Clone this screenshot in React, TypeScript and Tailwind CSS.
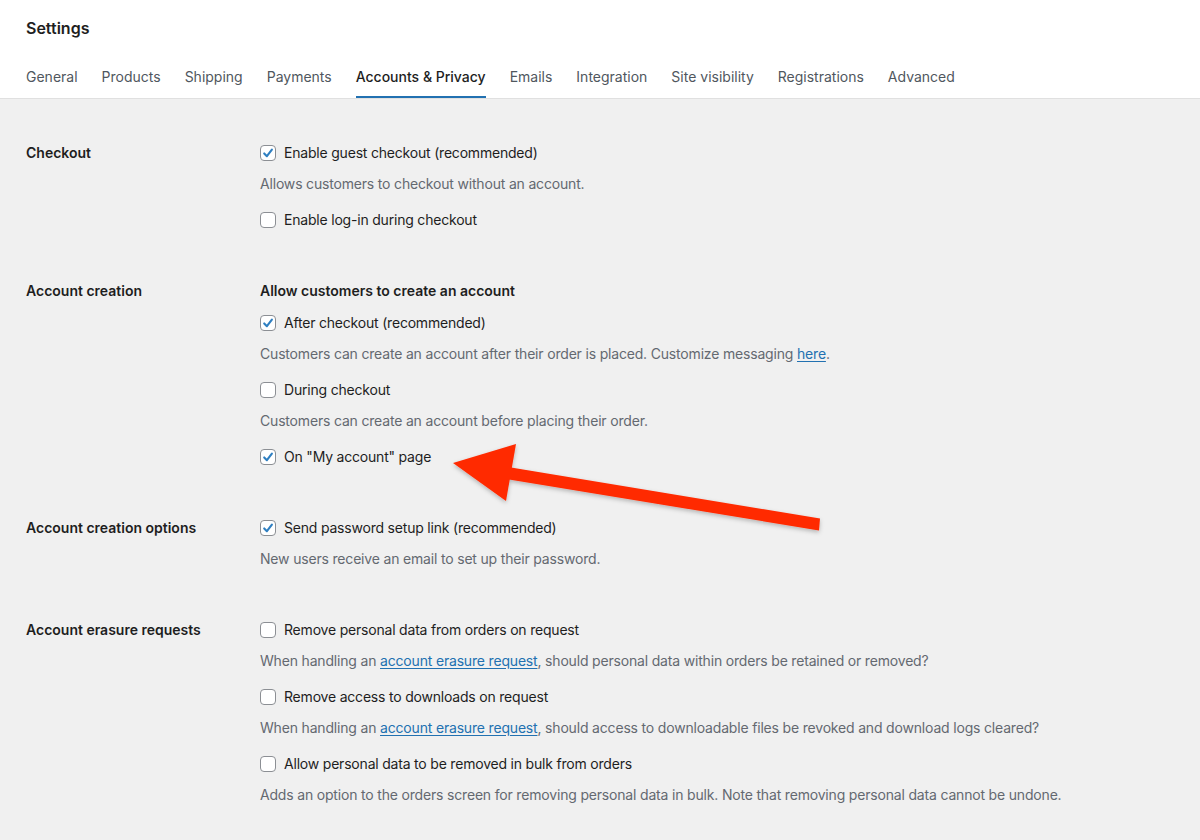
import React from "react"

const tabs = [
    "General",
    "Products",
    "Shipping",
    "Payments",
    "Accounts & Privacy",
    "Emails",
    "Integration",
    "Site visibility",
    "Registrations",
    "Advanced",
]

function Checkbox({ checked }: { checked?: boolean }) {
    return (
        <span className="w-4 h-4 shrink-0 rounded-[4px] border border-[#8c8f94] bg-white flex items-center justify-center">
            {checked && (
                <svg width="14" height="14" viewBox="0 0 14 14" fill="none">
                    <path d="M3.2 7.4 L5.9 10.2 L10.9 3.6" stroke="#2f7fc1" strokeWidth="2.1" strokeLinecap="round" strokeLinejoin="round" />
                </svg>
            )}
        </span>
    )
}

function Option({ label, checked }: { label: string, checked?: boolean }) {
    return (
        <label className="flex items-center gap-2 h-5 text-[#1e1e1e]">
            <Checkbox checked={checked} />
            <span className="tracking-[-0.2px]">{label}</span>
        </label>
    )
}

function Desc({ children }: { children: React.ReactNode }) {
    return <p className="h-5 leading-5 mt-[11px] mb-4 text-[#646970] tracking-[-0.18px]">{children}</p>
}

function Link({ children }: { children: React.ReactNode }) {
    return <a href="#" className="text-[#2271b1] underline underline-offset-2">{children}</a>
}

function Section({ title, children, last }: { title: string, children: React.ReactNode, last?: boolean }) {
    return (
        <div className={`grid grid-cols-[234px_1fr] ${last ? "pb-[13px]" : "pb-[51px]"}`}>
            <div className="font-semibold leading-5 text-[#1e1e1e]">{title}</div>
            <div className="flex flex-col [&>*:last-child]:mb-0">{children}</div>
        </div>
    )
}

export default function App() {
    return (
        <div className="relative h-[840px] overflow-hidden bg-[#f0f0f0] font-['Inter','Noto_Sans',sans-serif] text-[14px] leading-5">
            <header className="bg-white border-b border-[#e0e0e0] px-[26px] pt-[17px]">
                <h1 className="text-[16px] leading-[22px] font-semibold text-[#1e1e1e]">Settings</h1>
                <nav className="flex gap-6 mt-[28px]">
                    {tabs.map((tab) => (
                        <span
                            key={tab}
                            className={`pb-[9px] border-b-2 leading-5 ${tab === "Accounts & Privacy" ? "border-[#2271b1] text-[#1e1e1e] font-medium" : "border-transparent text-[#50575e]"}`}
                        >
                            {tab}
                        </span>
                    ))}
                </nav>
            </header>

            <main className="px-[26px] pt-[44px]">
                <Section title="Checkout">
                    <Option label="Enable guest checkout (recommended)" checked />
                    <Desc>Allows customers to checkout without an account.</Desc>
                    <Option label="Enable log-in during checkout" />
                </Section>

                <Section title="Account creation">
                    <div className="font-semibold h-5 mb-3 text-[#1e1e1e]">Allow customers to create an account</div>
                    <Option label="After checkout (recommended)" checked />
                    <Desc>
                        Customers can create an account after their order is placed. Customize messaging <Link>here</Link>.
                    </Desc>
                    <Option label="During checkout" />
                    <Desc>Customers can create an account before placing their order.</Desc>
                    <Option label={'On "My account" page'} checked />
                </Section>

                <Section title="Account creation options">
                    <Option label="Send password setup link (recommended)" checked />
                    <Desc>New users receive an email to set up their password.</Desc>
                </Section>

                <Section title="Account erasure requests" last>
                    <Option label="Remove personal data from orders on request" />
                    <Desc>
                        When handling an <Link>account erasure request</Link>, should personal data within orders be retained or removed?
                    </Desc>
                    <Option label="Remove access to downloads on request" />
                    <Desc>
                        When handling an <Link>account erasure request</Link>, should access to downloadable files be revoked and download logs cleared?
                    </Desc>
                    <Option label="Allow personal data to be removed in bulk from orders" />
                    <Desc>
                        Adds an option to the orders screen for removing personal data in bulk. Note that removing personal data cannot be undone.
                    </Desc>
                </Section>

                <h2 className="font-semibold text-[#1e1e1e] leading-5 mt-[29px]">Privacy policy</h2>
            </main>

            {/* annotation arrow */}
            <svg className="absolute left-0 top-0 pointer-events-none" width="1200" height="840" viewBox="0 0 1200 840">
                <defs>
                    <filter id="sh" x="-10%" y="-10%" width="120%" height="130%">
                        <feDropShadow dx="0" dy="2" stdDeviation="2" floodColor="#000" floodOpacity="0.25" />
                    </filter>
                </defs>
                <g filter="url(#sh)" fill="#ff2a00">
                    <polygon points="508,467 820,518.5 819,530.5 506,479" />
                    <polygon points="453,463 516,444 506,501" />
                </g>
            </svg>
        </div>
    )
}
